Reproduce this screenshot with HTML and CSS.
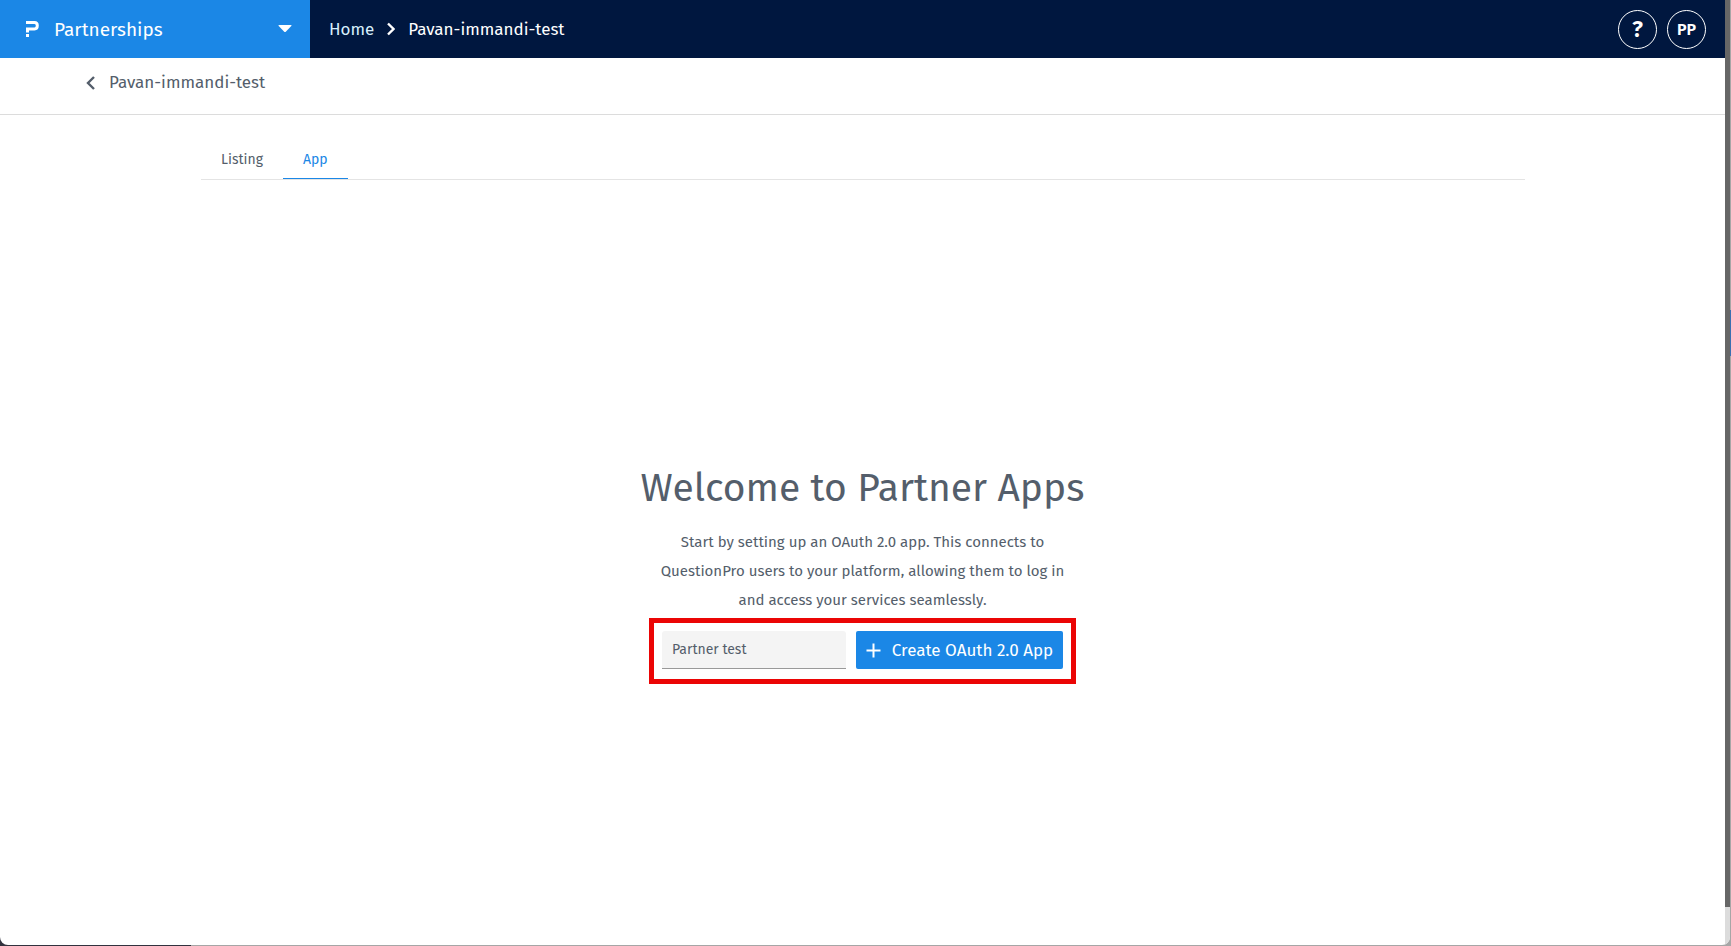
FILE: index.html
```html
<!DOCTYPE html>
<html lang="en">
<head>
    <meta charset="UTF-8">
    <meta name="viewport" content="width=device-width, initial-scale=1.0">
    <title>Partnerships - Pavan-immandi-test</title>
    <link rel="stylesheet" href="styles.css">
</head>
<body>
    <div class="window">
        <div class="page">
            <header class="topbar">
                <button type="button" class="product-switch">
                    <svg class="logo" width="13" height="16" viewBox="0 0 13 16" aria-hidden="true">
                        <path d="M0 1.5H8.5Q11.3 1.5 11.3 4.6Q11.3 8 8.5 8H1.5V11.5" fill="none" stroke="#fff" stroke-width="3"/>
                        <rect x="0" y="13" width="3" height="3" fill="#fff"/>
                        <rect x="0" y="3" width="3" height="3" fill="#1b87e6"/>
                    </svg>
                    <span>Partnerships</span>
                    <svg class="caret" width="14" height="8" viewBox="0 0 14 8" aria-hidden="true">
                        <path d="M1 0H13Q14 0 13.3 1L8 6.5Q7 7.5 6 6.5L.7 1Q0 0 1 0Z" fill="#fff"/>
                    </svg>
                </button>
                <nav class="breadcrumb">
                    <a href="#">Home</a>
                    <svg width="8" height="14" viewBox="0 0 8 14" aria-hidden="true">
                        <path d="M1 1.5L6.5 7L1 12.5" fill="none" stroke="#fff" stroke-width="2.4"/>
                    </svg>
                    <span>Pavan-immandi-test</span>
                </nav>
                <div class="actions">
                    <button type="button" class="round help">?</button>
                    <button type="button" class="round">PP</button>
                </div>
            </header>

            <div class="subheader">
                <a href="#" class="back">
                    <svg width="9" height="14" viewBox="0 0 9 14" aria-hidden="true">
                        <path d="M8 1L2 7L8 13" fill="none" stroke="#545e6b" stroke-width="2.4"/>
                    </svg>
                    Pavan-immandi-test
                </a>
            </div>

            <nav class="tabs">
                <a href="#" class="tab">Listing</a>
                <a href="#" class="tab active">App</a>
            </nav>

            <main class="welcome">
                <h1>Welcome to Partner Apps</h1>
                <p>Start by setting up an OAuth 2.0 app. This connects to<br>
                QuestionPro users to your platform, allowing them to log in<br>
                and access your services seamlessly.</p>
                <form class="create-form">
                    <input type="text" value="Partner test" aria-label="App name">
                    <button type="button" class="create">
                        <svg width="15" height="15" viewBox="0 0 15 15" aria-hidden="true">
                            <path d="M7.5 .5V14.5M.5 7.5H14.5" fill="none" stroke="#fff" stroke-width="2"/>
                        </svg>
                        Create OAuth 2.0 App
                    </button>
                </form>
            </main>
        </div>
        <div class="scroll-track">
            <div class="scroll-thumb"></div>
        </div>
    </div>
</body>
</html>
```

FILE: styles.css
```css
* {
    margin: 0;
    padding: 0;
    box-sizing: border-box;
}

/* the desktop shows through along the right and bottom edges */
body {
    background: linear-gradient(#32323e, #32323e) left bottom / 191px 10px no-repeat,
                linear-gradient(#3a6fb0, #3a6fb0) right 310px / 1px 46px no-repeat,
                #a6a6a6;
    font-family: "Fira Sans", "Noto Sans", sans-serif;
    font-size: 17px;
    color: #545e6b;
    height: 100vh;
    padding: 0 1px 1px 0;
}

a {
    color: inherit;
    text-decoration: none;
}

button {
    border: none;
    font-family: inherit;
    color: white;
    cursor: pointer;
}

svg {
    flex: none;
}

.window {
    display: flex;
    height: 100%;
    border-radius: 0 0 8px 8px;
    overflow: hidden;
    background: white;
}

.page {
    flex: 1;
    display: flex;
    flex-direction: column;
}

.scroll-track {
    width: 5px;
    background: #dcdcdc;
}

.scroll-thumb {
    height: 96%;
    background: #666;
}

.topbar {
    display: flex;
    height: 58px;
    background: #00173f;
    color: white;
}

.product-switch {
    display: flex;
    align-items: center;
    width: 310px;
    padding: 0 18px 0 26px;
    background: #1b87e6;
    font-size: 19px;
}

.logo {
    margin-right: 15px;
}

.caret {
    margin-left: auto;
}

.breadcrumb {
    display: flex;
    align-items: center;
    gap: 13px;
    padding-left: 19px;
}

.breadcrumb a {
    color: #d8effc;
}

.actions {
    display: flex;
    align-items: center;
    gap: 10px;
    margin-left: auto;
    padding-right: 19px;
}

.round {
    width: 39px;
    height: 39px;
    border: 1px solid white;
    border-radius: 50%;
    background: none;
    font-size: 16px;
    font-weight: 600;
}

.help {
    font-size: 23px;
}

.subheader {
    height: 57px;
    padding: 12px 86px;
    border-bottom: 1px solid #dcdcdc;
}

.back {
    display: inline-flex;
    align-items: center;
    gap: 14px;
    line-height: 26px;
}

.tabs {
    display: flex;
    height: 45px;
    margin: 20px 200px 0 201px;
    border-bottom: 1px solid #e4e4e4;
}

.tab {
    padding: 0 20px;
    font-size: 14px;
    line-height: 49px;
}

.tab.active {
    border-bottom: 1px solid #1b87e6;
    color: #1b87e6;
}

.welcome {
    flex: 1;
    display: flex;
    flex-direction: column;
    align-items: center;
    justify-content: center;
    padding-top: 23px;
    text-align: center;
}

.welcome h1 {
    margin-bottom: 16px;
    font-size: 39px;
    font-weight: 400;
    line-height: 48px;
}

.welcome p {
    margin-bottom: 3px;
    font-size: 15px;
    line-height: 29px;
}

.create-form {
    display: flex;
    gap: 10px;
    padding: 8px 8px 10px;
    border: 5px solid #eb0505;
}

.create-form input {
    width: 184px;
    height: 38px;
    padding: 0 10px;
    border: none;
    border-bottom: 1px solid #999;
    border-radius: 3px 3px 0 0;
    background: #f4f4f4;
    font-family: inherit;
    font-size: 14px;
    color: #545e6b;
}

.create {
    display: flex;
    align-items: center;
    justify-content: center;
    gap: 11px;
    width: 207px;
    height: 38px;
    border-radius: 2px;
    background: #1b87e6;
    font-size: 17px;
}
```
